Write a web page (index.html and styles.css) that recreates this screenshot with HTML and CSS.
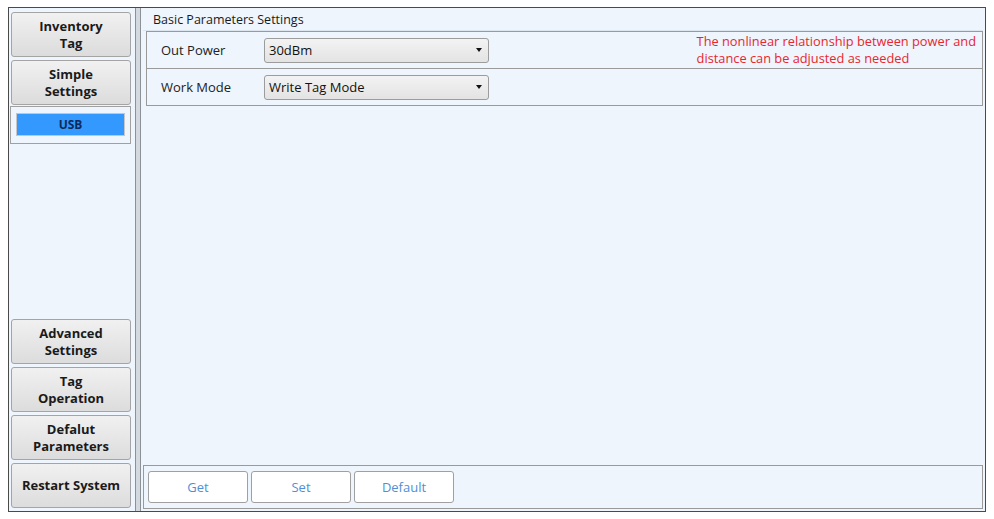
FILE: index.html
```html
<!DOCTYPE html>
<html>
<head>
<meta charset="utf-8">
<link rel="stylesheet" href="styles.css">
</head>
<body>
<div class="frame">
  <aside class="sidebar">
    <div class="nav-top">
      <button class="nav-btn">Inventory<br>Tag</button>
      <button class="nav-btn">Simple<br>Settings</button>
      <div class="sub-group">
        <button class="sub-btn">USB</button>
      </div>
    </div>
    <div class="nav-bottom">
      <button class="nav-btn">Advanced<br>Settings</button>
      <button class="nav-btn">Tag<br>Operation</button>
      <button class="nav-btn">Defalut<br>Parameters</button>
      <button class="nav-btn">Restart System</button>
    </div>
  </aside>
  <div class="splitter"></div>
  <main class="content">
    <div class="group-title">Basic Parameters Settings</div>
    <div class="rows">
      <div class="row">
        <span class="label">Out Power</span>
        <div class="select"><span>30dBm</span><span class="arrow"></span></div>
        <div class="note">The nonlinear relationship between power and<br>distance can be adjusted as needed</div>
      </div>
      <div class="row">
        <span class="label">Work Mode</span>
        <div class="select"><span>Write Tag Mode</span><span class="arrow"></span></div>
      </div>
    </div>
    <div class="spacer"></div>
    <div class="actions">
      <button class="act-btn">Get</button>
      <button class="act-btn">Set</button>
      <button class="act-btn">Default</button>
    </div>
  </main>
</div>
</body>
</html>
```

FILE: styles.css
```css
html, body {
  margin: 0;
  padding: 0;
  background: #ffffff;
}
body {
  font-family: "Open Sans", "Noto Sans", "DejaVu Sans", sans-serif;
  font-size: 13px;
  color: #222;
}
.frame {
  margin: 7px 0 0 8px;
  width: 976px;
  height: 503px;
  border: 1px solid #4a4a4a;
  background: #eef5fc;
  display: flex;
}
.sidebar {
  width: 126px;
  display: flex;
  flex-direction: column;
  justify-content: space-between;
  padding: 4px 0 3px 2px;
  box-sizing: border-box;
}
.nav-top, .nav-bottom {
  display: flex;
  flex-direction: column;
  gap: 3px;
}
.nav-btn {
  width: 120px;
  height: 45px;
  border: 1px solid #a4a4a4;
  border-radius: 3px;
  background: linear-gradient(#f1f1f1, #dcdcdc);
  font-family: "Open Sans", "Noto Sans", sans-serif;
  font-weight: 700;
  font-size: 13px;
  line-height: 17px;
  color: #1a1a1a;
  padding: 0;
  text-align: center;
}
.sub-group {
  width: 121px;
  height: 38px;
  box-sizing: border-box;
  border: 1px solid #a0a0a0;
  margin: -2px 0 0 -1px;
  padding: 6px 5px 0 5px;
  background: #eef5fc;
}
.sub-btn {
  width: 109px;
  height: 23px;
  border: 1px solid #c6c6c6;
  background: #3399ff;
  color: #102a55;
  font-family: "Open Sans", "Noto Sans", sans-serif;
  font-weight: 700;
  font-size: 12px;
  padding: 0;
  display: block;
}
.splitter {
  width: 4px;
  border-left: 1px solid #8c9198;
  border-right: 1px solid #8c9198;
  background: #d4d9df;
}
.content {
  flex: 1;
  display: flex;
  flex-direction: column;
  padding: 0 2px 2px 2px;
  box-sizing: border-box;
}
.group-title {
  height: 23px;
  padding: 3px 0 0 10px;
  box-sizing: border-box;
  font-size: 12.5px;
  line-height: 18px;
  color: #1a1a1a;
  border-bottom: 1px solid #dde6ef;
}
.rows {
  margin: 0 0 0 3px;
  border-left: 1px solid #9a9a9a;
  border-right: 1px solid #9a9a9a;
}
.row {
  height: 36px;
  border-top: 1px solid #9a9a9a;
  display: flex;
  align-items: center;
}
.row:last-child {
  border-bottom: 1px solid #9a9a9a;
}
.label {
  width: 103px;
  padding-left: 14px;
  font-size: 13px;
}
.select {
  width: 225px;
  height: 25px;
  box-sizing: border-box;
  border: 1px solid #9c9c9c;
  border-radius: 3px;
  background: linear-gradient(#f3f3f3, #e3e3e3);
  display: flex;
  align-items: center;
  justify-content: space-between;
  padding: 0 6px 0 4px;
  font-size: 13px;
  color: #111;
}
.arrow {
  width: 0;
  height: 0;
  border-left: 3.5px solid transparent;
  border-right: 3.5px solid transparent;
  border-top: 4px solid #111;
}
.note {
  margin-left: auto;
  margin-right: 6px;
  align-self: flex-start;
  padding-top: 1px;
  color: #e8262e;
  font-size: 12.8px;
  line-height: 17px;
}
.spacer {
  flex: 1;
}
.actions {
  height: 44px;
  box-sizing: border-box;
  border: 1px solid #9a9a9a;
  display: flex;
  align-items: center;
  gap: 3px;
  padding: 0 4px;
}
.act-btn {
  width: 100px;
  height: 32px;
  border: 1px solid #a0a0a0;
  border-radius: 3px;
  background: #ffffff;
  color: #4f8fd6;
  font-family: "Open Sans", "Noto Sans", sans-serif;
  font-size: 13px;
  padding: 0;
}
```
